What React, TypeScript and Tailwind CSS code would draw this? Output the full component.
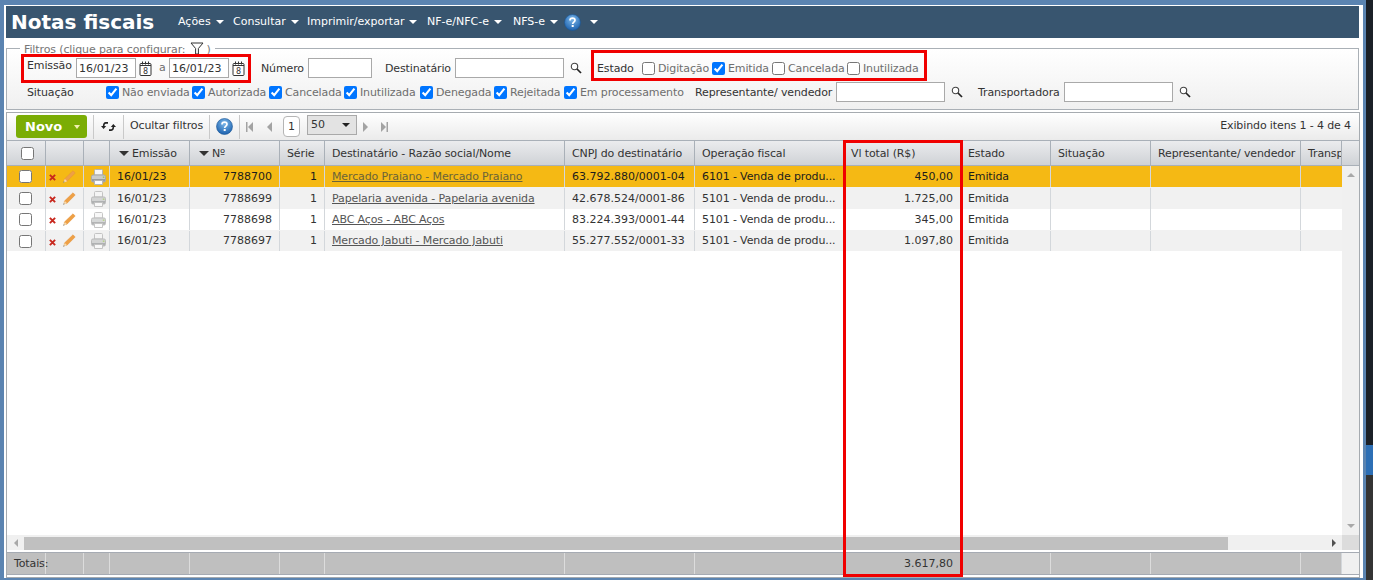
import type { ReactNode } from "react"

const gridCols =
  "grid grid-cols-[39px_38px_26px_80px_90px_45px_240px_130px_149px_117px_90px_100px_150px_41px]"

const rows = [
  { date: "16/01/23", num: "7788700", name: "Mercado Praiano - Mercado Praiano", cnpj: "63.792.880/0001-04", op: "6101 - Venda de produ...", total: "450,00" },
  { date: "16/01/23", num: "7788699", name: "Papelaria avenida - Papelaria avenida", cnpj: "42.678.524/0001-86", op: "5101 - Venda de produ...", total: "1.725,00" },
  { date: "16/01/23", num: "7788698", name: "ABC Aços - ABC Aços", cnpj: "83.224.393/0001-44", op: "5101 - Venda de produ...", total: "345,00" },
  { date: "16/01/23", num: "7788697", name: "Mercado Jabuti - Mercado Jabuti", cnpj: "55.277.552/0001-33", op: "5101 - Venda de produ...", total: "1.097,80" },
]

function Caret({ className = "" }: { className?: string }) {
  return <span className={`inline-block w-0 h-0 border-x-[4px] border-x-transparent border-t-[4px] ${className}`} />
}

function HelpIcon() {
  return (
    <svg width="17" height="17" viewBox="0 0 17 17">
      <defs>
        <radialGradient id="hg" cx="50%" cy="30%" r="70%">
          <stop offset="0" stopColor="#7db8ea" />
          <stop offset="1" stopColor="#1d62ae" />
        </radialGradient>
      </defs>
      <circle cx="8.5" cy="8.5" r="8" fill="url(#hg)" stroke="#1a5596" strokeWidth="0.6" />
      <path d="M6 6.4C6 4.9 7.1 4.2 8.5 4.2S11 5 11 6.3c0 1.9-2.3 1.8-2.3 3.7" fill="none" stroke="#fff" strokeWidth="1.7" />
      <rect x="7.7" y="11" width="2" height="2" fill="#fff" />
    </svg>
  )
}

function Calendar() {
  return (
    <svg width="13" height="15" viewBox="0 0 13 15" className="shrink-0">
      <rect x="1" y="2.5" width="11" height="12" rx="1" fill="#fff" stroke="#333" />
      <path d="M3.5 0.5v3M6.5 0.5v3M9.5 0.5v3" stroke="#333" />
      <path d="M1 4.5h11" stroke="#333" />
      <text x="6.5" y="13" fontSize="8" textAnchor="middle" fill="#333" fontFamily="DejaVu Sans">8</text>
    </svg>
  )
}

function Search() {
  return (
    <svg width="12" height="12" viewBox="0 0 12 12" className="shrink-0">
      <circle cx="4.5" cy="4.5" r="3.2" fill="#fff" stroke="#444" strokeWidth="1.1" />
      <path d="M7 7l4 4" stroke="#222" strokeWidth="1.7" />
    </svg>
  )
}

function Printer({ faded }: { faded?: boolean }) {
  return (
    <svg width="15" height="16" viewBox="0 0 15 16" className={faded ? "opacity-75" : ""}>
      <path d="M3.5 1.5q0-1 1-1h6q1 0 1 1V6h-8z" fill="#f6f6f6" stroke="#b4b4b4" />
      <rect x="0.5" y="6" width="14" height="7" rx="1.5" fill="#c9cbcb" stroke="#a8a8a8" />
      <path d="M1 10h13v2.5H1z" fill="#9a9c9d" />
      <path d="M3.5 11.5h8v4h-8z" fill="#fbfbfb" stroke="#b4b4b4" />
      <rect x="11.8" y="7.5" width="1.6" height="1.4" fill="#9cc45a" />
    </svg>
  )
}

function Pencil() {
  return (
    <svg width="14" height="14" viewBox="0 0 14 14">
      <path d="M11 0.8l2.2 2.2-8.4 8.4-2.6-0.1 0.2-2.2z" fill="#eea045" stroke="#e5913a" strokeWidth="0.5" />
      <path d="M5.2 11.3l-2.4-2.4-1.6 3.8z" fill="#f6d9ac" />
      <path d="M1.2 12.7l0.6-1.5 0.9 0.9z" fill="#555" />
    </svg>
  )
}

function Cross() {
  return (
    <svg width="7" height="7" viewBox="0 0 8 8" className="mt-[2px]">
      <path d="M1 1l6 6M7 1L1 7" stroke="#c8281e" strokeWidth="2.2" />
    </svg>
  )
}

function Refresh() {
  return (
    <svg width="15" height="13" viewBox="0 0 15 12" fill="none" stroke="#222" strokeWidth="1.6">
      <path d="M7 2.4H4.8C3 2.4 2.6 4 2.6 6.5" />
      <path d="M0 5.6l2.6 3 2.6-3" fill="#222" stroke="none" />
      <path d="M8 9.6h2.2c1.8 0 2.2-1.6 2.2-4.1" />
      <path d="M9.8 6.4l2.6-3 2.6 3" fill="#222" stroke="none" />
    </svg>
  )
}

function Check({ label, checked, className }: { label: string; checked?: boolean; className: string }) {
  return (
    <label className={`flex items-center gap-[3px] text-[#6e6e6e] whitespace-nowrap ${className}`}>
      <input type="checkbox" defaultChecked={checked} className="m-0 w-[13px] h-[13px] shrink-0" />
      <span className="pt-[2px]">{label}</span>
    </label>
  )
}

function TextBox({ className, value }: { className: string; value?: string }) {
  return (
    <input
      readOnly
      value={value ?? ""}
      className={`h-[20px] bg-white border border-[#a9a9a9] px-[2px] text-[#333] tracking-normal outline-none shrink-0 ${className}`}
    />
  )
}

function Sep() {
  return <div className="w-px h-[24px] bg-[#c9c9c9] shrink-0" />
}

function Pager({ dir, bar }: { dir: "l" | "r"; bar?: boolean }) {
  return (
    <svg width="7" height="10" viewBox="0 0 7 10" fill="#a3a3a3" className="shrink-0">
      {dir === "l" ? (
        <>
          {bar && <rect x="0" y="0" width="1.5" height="10" />}
          <path d="M7 0v10L2 5z" />
        </>
      ) : (
        <>
          <path d="M0 0v10l5-5z" />
          {bar && <rect x="5.5" y="0" width="1.5" height="10" />}
        </>
      )}
    </svg>
  )
}

function HeadCell({ children, sort }: { children?: ReactNode; sort?: boolean }) {
  return (
    <div className="flex items-center px-[7px] pt-px border-r border-[#a9b0b8] whitespace-nowrap overflow-hidden">
      {sort && <Caret className="border-t-[#333] mr-[3px] ml-[2px] !border-x-[5px] !border-t-[5px]" />}
      {children}
    </div>
  )
}

function Cell({ children, right, className = "" }: { children?: ReactNode; right?: boolean; className?: string }) {
  return (
    <div className={`flex items-center px-[7px] border-r border-[#d3d7db] whitespace-nowrap overflow-hidden ${right ? "justify-end" : ""} ${className}`}>
      {children}
    </div>
  )
}

export default function App() {
  return (
    <div className="relative w-[1373px] h-[580px] overflow-hidden bg-[#5b84b1] flex text-[11px] leading-[14px] tracking-[-0.12px] text-[#333] [font-family:'DejaVu_Sans',sans-serif]">
      <div className="ml-[4px] mt-[5px] w-[1359px] h-[573px] bg-white pl-[2px] pt-px flex flex-col">
        <header className="w-[1353px] h-[32px] bg-[#38556f] flex items-center text-white tracking-normal shrink-0">
          <h1 className="ml-[5px] w-[167px] text-[20px] font-bold leading-none">Notas fiscais</h1>
          <nav className="flex items-center">
            <span className="w-[55px] flex items-center gap-[5px]">Ações <Caret className="border-t-white" /></span>
            <span className="w-[74px] flex items-center gap-[5px]">Consultar <Caret className="border-t-white" /></span>
            <span className="w-[120px] flex items-center gap-[5px]">Imprimir/exportar <Caret className="border-t-white" /></span>
            <span className="w-[86px] flex items-center gap-[5px]">NF-e/NFC-e <Caret className="border-t-white" /></span>
            <span className="w-[51px] flex items-center gap-[5px]">NFS-e <Caret className="border-t-white" /></span>
            <HelpIcon />
            <Caret className="border-t-white ml-[9px]" />
          </nav>
        </header>

        <section className="relative mt-[10px] w-[1353px] h-[62px] border border-[#aab0b6] bg-gradient-to-b from-white to-[#f0f0f0] pl-[20px] pt-[9px] shrink-0">
          <div className="absolute -top-[7px] left-[13px] bg-white px-[4px] flex items-center text-[#777] h-[15px]">
            Filtros (clique para configurar:
            <svg width="14" height="13" viewBox="0 0 14 13" className="ml-[5px] -mt-[2px]">
              <path d="M1 1h12L8.4 6.5V12H5.6V6.5z" fill="#fff" stroke="#333" />
            </svg>
            <span className="ml-[2px]">)</span>
          </div>

          <div className="flex items-center h-[20px]">
            <span className="w-[49px] -mt-[4px]">Emissão</span>
            <TextBox className="w-[60px]" value="16/01/23" />
            <span className="ml-[3px]"><Calendar /></span>
            <span className="ml-[7px] w-[10px] text-[#6e6e6e]">a</span>
            <TextBox className="w-[60px]" value="16/01/23" />
            <span className="ml-[3px]"><Calendar /></span>
            <span className="ml-[16px] w-[47px] pt-[2px]">Número</span>
            <TextBox className="w-[64px]" />
            <span className="ml-[13px] w-[70px] pt-[2px]">Destinatário</span>
            <TextBox className="w-[109px]" />
            <span className="ml-[6px]"><Search /></span>
            <span className="ml-[15px] w-[45px] pt-[2px]">Estado</span>
            <Check label="Digitação" className="w-[70px]" />
            <Check label="Emitida" checked className="w-[60px]" />
            <Check label="Cancelada" className="w-[75px]" />
            <Check label="Inutilizada" className="w-[80px]" />
          </div>

          <div className="flex items-center h-[20px] mt-[4px]">
            <span className="w-[79px] pt-[2px]">Situação</span>
            <Check label="Não enviada" checked className="w-[86px]" />
            <Check label="Autorizada" checked className="w-[77px]" />
            <Check label="Cancelada" checked className="w-[75px]" />
            <Check label="Inutilizada" checked className="w-[76px]" />
            <Check label="Denegada" checked className="w-[74px]" />
            <Check label="Rejeitada" checked className="w-[70px]" />
            <Check label="Em processamento" checked className="w-[131px]" />
            <span className="w-[141px] pt-[2px] whitespace-nowrap">Representante/ vendedor</span>
            <TextBox className="w-[109px]" />
            <span className="ml-[6px] w-[27px]"><Search /></span>
            <span className="w-[86px] pt-[2px]">Transportadora</span>
            <TextBox className="w-[109px]" />
            <span className="ml-[6px]"><Search /></span>
          </div>
        </section>

        <section className="mt-[2px] w-[1354px] h-[466px] border border-[#a6abb0] flex flex-col shrink-0">
          <div className="h-[27px] flex items-center bg-gradient-to-b from-white to-[#ebebeb] pl-[9px] pr-[8px] shrink-0">
            <button className="w-[71px] h-[23px] rounded-[3px] bg-[#7bad05] text-white font-bold text-[13px] tracking-normal flex items-center pl-[9px] shrink-0">
              Novo
              <Caret className="border-t-[#f3f0b0] ml-[12px] !border-x-[3px]" />
            </button>
            <div className="ml-[6px]"><Sep /></div>
            <div className="w-[29px] flex justify-center"><Refresh /></div>
            <Sep />
            <span className="w-[85px] -mt-[2px] text-center whitespace-nowrap">Ocultar filtros</span>
            <Sep />
            <div className="w-[29px] flex justify-center"><HelpIcon /></div>
            <Sep />
            <div className="ml-[6px] w-[19px]"><Pager dir="l" bar /></div>
            <div className="w-[18px]"><Pager dir="l" /></div>
            <span className="w-[17px] h-[21px] bg-white border border-[#b5b5b5] rounded-[4px] flex items-center justify-center shrink-0">1</span>
            <div className="ml-[7px] w-[50px] h-[20px] -mt-[3px] bg-[#e3e3e3] border border-[#a9a9a9] flex items-center justify-between pl-[3px] pr-[6px] shrink-0">
              50
              <Caret className="border-t-[#222] !border-x-[4px] !border-t-[4px]" />
            </div>
            <div className="ml-[6px] w-[18px]"><Pager dir="r" /></div>
            <Pager dir="r" bar />
            <span className="ml-auto -mt-[2px] whitespace-nowrap">Exibindo itens 1 - 4 de 4</span>
          </div>

          <div className="flex h-[26px] shrink-0 bg-gradient-to-b from-[#ebecee] to-[#cfd2d6] border-y border-[#a9b0b8]">
            <div className={`${gridCols} w-[1335px]`}>
              <HeadCell><input type="checkbox" className="m-0 ml-[7px] w-[13px] h-[13px]" /></HeadCell>
              <HeadCell />
              <HeadCell />
              <HeadCell sort>Emissão</HeadCell>
              <HeadCell sort>Nº</HeadCell>
              <HeadCell>Série</HeadCell>
              <HeadCell>Destinatário - Razão social/Nome</HeadCell>
              <HeadCell>CNPJ do destinatário</HeadCell>
              <HeadCell>Operação fiscal</HeadCell>
              <HeadCell>Vl total (R$)</HeadCell>
              <HeadCell>Estado</HeadCell>
              <HeadCell>Situação</HeadCell>
              <HeadCell>Representante/ vendedor</HeadCell>
              <HeadCell>Transp</HeadCell>
            </div>
          </div>

          <div className="flex flex-1 min-h-0">
            <div className="w-[1335px] bg-white">
              {rows.map((row, i) => {
                const bg = i === 0 ? "bg-[#f5b914] text-[#1c1c1c]" : i % 2 === 1 ? "bg-[#f1f1f1] pt-px" : "bg-white"
                return (
                  <div key={row.num} className={`${gridCols} ${i === 1 ? "h-[22px]" : "h-[21px]"} ${bg}`}>
                    <Cell className="!pl-[12px] !pr-0"><input type="checkbox" className="m-0 w-[13px] h-[13px]" /></Cell>
                    <Cell className="!px-[3px] gap-[6px]"><Cross /><Pencil /></Cell>
                    <Cell className="!pl-[7px] !pr-0"><Printer faded={i !== 0} /></Cell>
                    <Cell className="tracking-normal">{row.date}</Cell>
                    <Cell right className="tracking-normal">{row.num}</Cell>
                    <Cell right>1</Cell>
                    <Cell className={i === 0 ? "text-[#6b6438] underline" : "text-[#555] underline"}>{row.name}</Cell>
                    <Cell className="tracking-normal">{row.cnpj}</Cell>
                    <Cell>{row.op}</Cell>
                    <Cell right className="tracking-normal">{row.total}</Cell>
                    <Cell>Emitida</Cell>
                    <Cell />
                    <Cell />
                    <Cell className="border-r-0" />
                  </div>
                )
              })}
            </div>
            <div className="w-[17px] bg-[#f0f0f0] flex flex-col items-center justify-between py-[7px]">
              <span className="w-0 h-0 border-x-[4px] border-x-transparent border-b-[4px] border-b-[#a8a8a8]" />
              <span className="w-0 h-0 border-x-[4px] border-x-transparent border-t-[4px] border-t-[#a8a8a8]" />
            </div>
          </div>

          <div className="flex h-[17px] shrink-0 bg-white">
            <div className="w-[1335px] h-[15px] bg-[#f0f0f0] flex items-stretch">
              <div className="w-[17px] flex items-center justify-center">
                <span className="w-0 h-0 border-y-[4px] border-y-transparent border-r-[4px] border-r-[#a8a8a8]" />
              </div>
              <div className="w-[1204px] mt-[2px] bg-[#c0c0c0]" />
              <div className="ml-auto w-[17px] flex items-center justify-center">
                <span className="w-0 h-0 border-y-[4px] border-y-transparent border-l-[4px] border-l-[#505050]" />
              </div>
            </div>
            <div className="w-[17px] h-[15px] bg-[#dcdcdc]" />
          </div>

          <div className="flex h-[23px] mb-[2px] shrink-0 border-y border-[#a6abb3]">
            <div className={`${gridCols} w-[1335px] bg-[#bfbfbf]`}>
              <Cell className="!overflow-visible border-[#dcdcdc]">Totais:</Cell>
              <Cell className="border-[#dcdcdc]" />
              <Cell className="border-[#dcdcdc]" />
              <Cell className="border-[#dcdcdc]" />
              <Cell className="border-[#dcdcdc]" />
              <Cell className="border-[#dcdcdc]" />
              <Cell className="border-[#dcdcdc]" />
              <Cell className="border-[#dcdcdc]" />
              <Cell className="border-[#dcdcdc]" />
              <Cell right className="border-[#dcdcdc] tracking-normal">3.617,80</Cell>
              <Cell className="border-[#dcdcdc]" />
              <Cell className="border-[#dcdcdc]" />
              <Cell className="border-[#dcdcdc]" />
              <Cell className="border-[#a6abb3]" />
            </div>
            <div className="w-[17px] bg-[#f0f0f0]" />
          </div>
        </section>
      </div>

      <div className="ml-[3px] w-[7px] h-full flex flex-col">
        <div className="h-[445px] bg-[#1b2027]" />
        <div className="h-[30px] bg-[#2d6fb5]" />
        <div className="flex-1 bg-[#343434]" />
      </div>

      {/* annotations drawn on top of the screenshot */}
      <div className="absolute left-[21px] top-[54px] w-[230px] h-[29px] border-[3px] border-[#f00000]" />
      <div className="absolute left-[591px] top-[50px] w-[336px] h-[31px] border-[3px] border-[#f00000]" />
      <div className="absolute left-[843px] top-[140px] w-[120px] h-[437px] border-[3px] border-[#f00000]" />
    </div>
  )
}
